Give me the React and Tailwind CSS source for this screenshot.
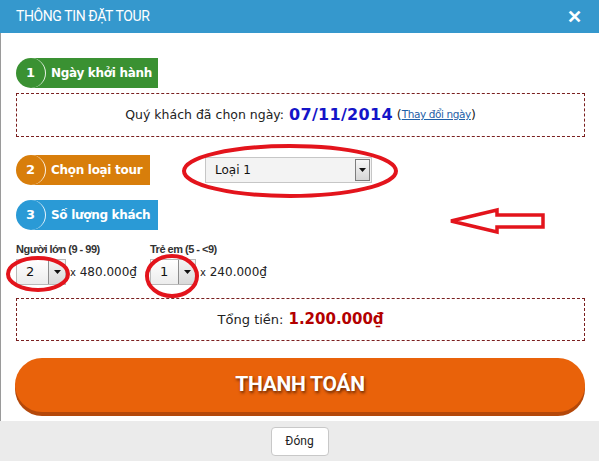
import React from 'react';

const FONT = "font-['DejaVu_Sans',Verdana,sans-serif]";

function StepPill({ num, label, color, width }) {
  return (
    <div className={`flex items-center h-[30px] rounded-l-full rounded-r-[6px] ${color} ${width}`}>
      <div className="w-[30px] h-[30px] rounded-full border-r-[1.5px] border-white/90 flex items-center justify-center text-white font-bold text-[13px]">
        {num}
      </div>
      <span className="ml-[5px] text-white font-bold text-[12px] tracking-[-0.3px] whitespace-nowrap">{label}</span>
    </div>
  );
}

function Arrow() {
  return (
    <svg width="7" height="4" viewBox="0 0 7 4">
      <path d="M0 0h7L3.5 4z" fill="#111" />
    </svg>
  );
}

function SmallSelect({ value, width }) {
  return (
    <div className={`flex h-[26px] border border-[#b9b9b9] bg-gradient-to-b from-white to-[#ececec] ${width}`}>
      <span className="flex-1 pl-[9px] flex items-center text-[13px] text-[#111]">{value}</span>
      <div className="w-[17px] border-l border-[#8d8d8d] bg-gradient-to-b from-[#f4f4f4] to-[#d9d9d9] flex items-center justify-center">
        <Arrow />
      </div>
    </div>
  );
}

export default function App() {
  return (
    <div className={`w-[599px] h-[461px] bg-white relative overflow-hidden ${FONT}`}>
      {/* Header */}
      <div className="h-[33px] bg-[#3598cd] flex items-center justify-between pl-[16px] pr-[17px]">
        <span className="text-white text-[14px] font-['Roboto',sans-serif] tracking-[-0.4px]">THÔNG TIN ĐẶT TOUR</span>
        <span className="text-white font-bold text-[18px] leading-none font-['Liberation_Sans',Arial,sans-serif]">✕</span>
      </div>

      {/* Body */}
      <div className="h-[388px] border-l border-[#9a9a9a] pl-[15px] pr-[14px] pt-[25px] relative">
        <StepPill num="1" label="Ngày khởi hành" color="bg-[#3a9132]" width="w-[142px]" />

        <div className="mt-[5px] h-[44px] border border-dashed border-[#7a1f1f] flex items-center justify-center text-[12.5px] text-[#222]">
          <span>Quý khách đã chọn ngày:</span>
          <span className="ml-[5px] text-[#1414c8] font-bold text-[16px] tracking-[0.3px]">07/11/2014</span>
          <span className="ml-[4px]">(</span>
          <a className="text-[#1f5fa8] underline text-[10.5px] tracking-[-0.4px]">Thay đổi ngày</a>
          <span>)</span>
        </div>

        <div className="mt-[18px] flex items-center h-[29px]">
          <StepPill num="2" label="Chọn loại tour" color="bg-[#d87e0b]" width="w-[134px]" />
          <div className="ml-[55px] flex h-[26px] w-[167px] border border-[#c6c6c6] bg-[#f3f3f3]">
            <span className="flex-1 pl-[9px] flex items-center text-[12px] text-[#111]">Loại 1</span>
            <div className="my-[1px] mr-[1px] w-[15px] border border-[#7d7d7d] bg-gradient-to-b from-[#f6f6f6] to-[#d6d6d6] flex items-center justify-center">
              <Arrow />
            </div>
          </div>
        </div>

        <div className="mt-[16px]">
          <StepPill num="3" label="Số lượng khách" color="bg-[#2a9ad6]" width="w-[142px]" />
        </div>

        <div className="mt-[12px] flex">
          <div className="w-[134px]">
            <div className="text-[11px] font-bold text-[#333] tracking-[-0.5px] leading-[14px] font-['Liberation_Sans',Arial,sans-serif]">Người lớn (9 - 99)</div>
            <div className="mt-[3px] flex items-center">
              <SmallSelect value="2" width="w-[50px]" />
              <span className="ml-[4px] text-[12px] text-[#222]"><span className="text-[10px]">x</span> 480.000₫</span>
            </div>
          </div>
          <div>
            <div className="text-[11px] font-bold text-[#333] tracking-[-0.5px] leading-[14px] font-['Liberation_Sans',Arial,sans-serif]">Trẻ em (5 - &lt;9)</div>
            <div className="mt-[3px] flex items-center">
              <SmallSelect value="1" width="w-[46px]" />
              <span className="ml-[4px] text-[12px] text-[#222]"><span className="text-[10px]">x</span> 240.000₫</span>
            </div>
          </div>
        </div>

        <div className="mt-[13px] h-[43px] border border-dashed border-[#7a1f1f] flex items-center justify-center text-[13px] text-[#222]">
          <span>Tổng tiền:</span>
          <span className="ml-[5px] text-[#b30000] font-bold text-[15px]">1.200.000₫</span>
        </div>

        <button className="mt-[17px] w-[570px] -ml-[1px] h-[54px] rounded-full bg-[#e9620a] shadow-[0_4px_0_#b4480a] flex items-center justify-center">
          <span className="text-white font-bold text-[21px] font-['Roboto',sans-serif] tracking-[-0.3px] [text-shadow:1px_2px_3px_rgba(60,20,0,0.75)]">THANH TOÁN</span>
        </button>
      </div>

      {/* Footer */}
      <div className="h-[40px] bg-[#ebebeb] flex items-center justify-center">
        <button className="w-[58px] h-[29px] bg-white border border-[#c8c8c8] rounded-[4px] text-[12px] text-[#222] font-['Roboto',sans-serif]">Đóng</button>
      </div>

      {/* Red annotations */}
      <svg className="absolute left-0 top-0 pointer-events-none" width="599" height="461">
        <ellipse cx="290" cy="171" rx="106" ry="25" fill="none" stroke="#e3141c" strokeWidth="4" />
        <ellipse cx="38" cy="274" rx="30" ry="16" fill="none" stroke="#e3141c" strokeWidth="4" />
        <ellipse cx="172" cy="276" rx="25" ry="20" fill="none" stroke="#e3141c" strokeWidth="4" />
        <polygon points="451,221 497,210 497,215 543,215 543,227 497,227 497,232" fill="none" stroke="#e3141c" strokeWidth="3.5" strokeLinejoin="miter" />
      </svg>
    </div>
  );
}
